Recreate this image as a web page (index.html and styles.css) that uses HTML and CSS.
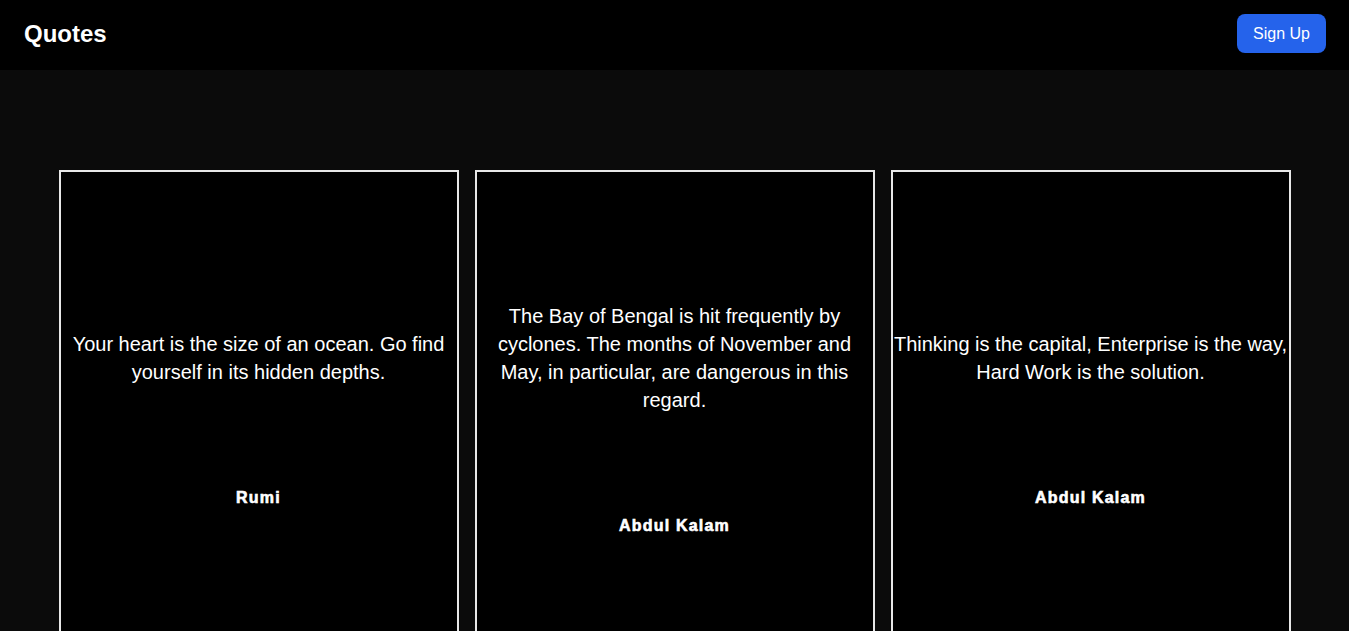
FILE: index.html
```html
<!DOCTYPE html>
<html>
<head>
<meta charset="utf-8">
<link rel="stylesheet" href="styles.css">
</head>
<body>
<header class="topbar">
  <div class="brand">Quotes</div>
  <button class="signup">Sign Up</button>
</header>
<main class="content">
  <div class="cards">
    <div class="card">
      <p class="quote">Your heart is the size of an ocean. Go find yourself in its hidden depths.</p>
      <p class="author">Rumi</p>
    </div>
    <div class="card">
      <p class="quote">The Bay of Bengal is hit frequently by cyclones. The months of November and May, in particular, are dangerous in this regard.</p>
      <p class="author">Abdul Kalam</p>
    </div>
    <div class="card">
      <p class="quote">Thinking is the capital, Enterprise is the way, Hard Work is the solution.</p>
      <p class="author">Abdul Kalam</p>
    </div>
  </div>
</main>
</body>
</html>
```

FILE: styles.css
```css
html, body {
  margin: 0;
  padding: 0;
  background: #0b0b0b;
  color: #fff;
  font-family: "Liberation Sans", Arial, sans-serif;
  overflow: hidden;
  height: 631px;
}
.topbar {
  height: 70px;
  background: #000;
  display: flex;
  align-items: center;
  justify-content: space-between;
  padding: 0 23px 0 24px;
  box-sizing: border-box;
}
.brand {
  font-size: 24px;
  font-weight: bold;
  margin-top: -3px;
}
.signup {
  background: #2563eb;
  color: #fff;
  border: none;
  border-radius: 8px;
  font-family: "Liberation Sans", Arial, sans-serif;
  font-size: 16px;
  line-height: 23px;
  padding: 8px 16px;
  margin-top: -3px;
}
.content {
  padding-top: 100px;
}
.cards {
  display: flex;
  justify-content: center;
  gap: 16px;
}
.card {
  width: 400px;
  height: 498px;
  box-sizing: border-box;
  border: 2px solid #e8e8e8;
  padding-top: 2px;
  background: #000;
  display: flex;
  flex-direction: column;
  justify-content: center;
  align-items: center;
  text-align: center;
}
.quote {
  font-size: 20px;
  line-height: 28px;
  margin: 0;
}
.author {
  font-size: 16px;
  font-weight: 700;
  letter-spacing: 1.2px;
  -webkit-text-stroke: 0.6px #fff;
  line-height: 24px;
  margin: 100px 0 0 0;
}
```
